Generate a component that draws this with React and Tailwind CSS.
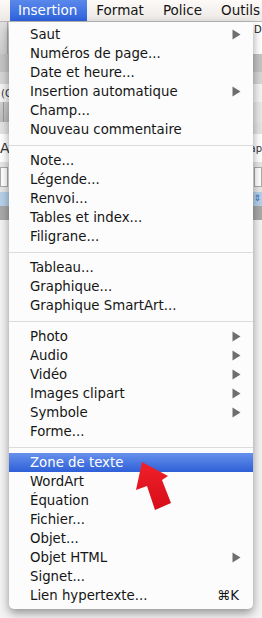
import React from 'react';

const groups = [
  [
    { label: 'Saut', sub: true },
    { label: 'Numéros de page...' },
    { label: 'Date et heure...' },
    { label: 'Insertion automatique', sub: true },
    { label: 'Champ...' },
    { label: 'Nouveau commentaire' },
  ],
  [
    { label: 'Note...' },
    { label: 'Légende...' },
    { label: 'Renvoi...' },
    { label: 'Tables et index...' },
    { label: 'Filigrane...' },
  ],
  [
    { label: 'Tableau...' },
    { label: 'Graphique...' },
    { label: 'Graphique SmartArt...' },
  ],
  [
    { label: 'Photo', sub: true },
    { label: 'Audio', sub: true },
    { label: 'Vidéo', sub: true },
    { label: 'Images clipart', sub: true },
    { label: 'Symbole', sub: true },
    { label: 'Forme...' },
  ],
  [
    { label: 'Zone de texte', active: true },
    { label: 'WordArt' },
    { label: 'Équation' },
    { label: 'Fichier...' },
    { label: 'Objet...' },
    { label: 'Objet HTML', sub: true },
    { label: 'Signet...' },
    { label: 'Lien hypertexte...', shortcut: '⌘K' },
  ],
];

const SubArrow = () => (
  <svg width="9" height="11" viewBox="0 0 9 11" className="mr-[1px]">
    <path d="M0.5 0.5 L8.5 5.5 L0.5 10.5 Z" fill="#6e6e6e" />
  </svg>
);

const MenuItem = ({ item }) => (
  <div
    className={
      'h-[19px] flex items-center justify-between pl-[21px] pr-[11px] ' +
      (item.active
        ? 'bg-gradient-to-b from-[#6690ea] to-[#2f5fd8] text-white'
        : 'text-[#151515]')
    }
  >
    <span>{item.label}</span>
    {item.sub && <SubArrow />}
    {item.shortcut && <span className="pr-[3px]">{item.shortcut}</span>}
  </div>
);

const App = () => {
  return (
    <div className="relative w-[262px] h-[618px] overflow-hidden bg-[#f1f1f1] font-['DejaVu_Sans',sans-serif]">
      {/* menubar */}
      <div className="h-[22px] flex items-stretch bg-gradient-to-b from-[#fdfaf7] to-[#ebe8e5] border-b border-[#b9b9b9] text-[13.5px] text-[#141414] whitespace-nowrap">
        <div className="ml-[10px] pl-[8px] pr-[10px] flex items-center bg-gradient-to-b from-[#5a88ea] to-[#2e61dc] text-white">
          Insertion
        </div>
        <div className="pl-[9px] pr-[10px] flex items-center">Format</div>
        <div className="pl-[9px] pr-[10px] flex items-center">Police</div>
        <div className="pl-[9px] flex items-center">Outils</div>
      </div>

      {/* app window behind the menu */}
      <div className="flex flex-col text-[12px] text-[#333]">
        <div className="h-[32px] bg-gradient-to-b from-[#e0e0e0] to-[#cdcdcd] flex justify-between">
          <div className="w-[8px] border-r border-[#aaa]" />
          <div className="w-[9px] bg-white pl-[1px] text-[10px] text-[#222]">D</div>
        </div>
        <div className="h-[18px] bg-[#c4c4c4]" />
        <div className="h-[12px] bg-[#d6d6d6]" />
        <div className="h-[18px] bg-[#f4f4f4] flex items-center px-[1px] text-[10px]">
          <span>(C</span>
        </div>
        <div className="h-[20px] bg-gradient-to-b from-[#cfcfcf] to-[#bdbdbd] flex justify-between">
          <div className="w-[4px] border-r border-[#999]" />
          <div className="w-[9px] bg-[#e8e8e8]" />
        </div>
        <div className="h-[12px] bg-[#e4e4e4]" />
        <div className="h-[28px] bg-white flex items-center justify-between text-[14px]">
          <span>A</span>
          <span className="text-[10px]">ap</span>
        </div>
        <div className="h-[30px] bg-[#e7e7e7] flex items-center justify-between">
          <div className="w-[8px] h-[20px] border border-[#aaa] bg-white" />
          <div className="w-[8px] h-[20px] border border-[#aaa] bg-white" />
        </div>
        <div className="h-[14px] bg-[#b7d0ea] flex justify-end">
          <span className="text-[9px] text-[#3a6fc4] pr-[1px]">⇕</span>
        </div>
        <div className="h-[14px] bg-[#a9a9a9]" />
        <div className="h-[400px] bg-[#f3f3f3]" />
      </div>

      {/* Insertion menu */}
      <div className="absolute left-[9px] top-[22px] w-[244px] pt-[3px] pb-[4px] bg-[#fcfcfc] rounded-b-[5px] shadow-[0_4px_10px_rgba(0,0,0,0.4)] text-[13.3px]">
        {groups.map((group, gi) => (
          <div key={gi}>
            {gi > 0 && (
              <div className="h-[12px] flex items-center">
                <div className="h-px w-full bg-[#dcdcdc]" />
              </div>
            )}
            {group.map(item => (
              <MenuItem key={item.label} item={item} />
            ))}
          </div>
        ))}
      </div>

      {/* red arrow */}
      <svg className="absolute left-0 top-0" width="262" height="618" viewBox="0 0 262 618">
        <defs>
          <linearGradient id="redArrow" x1="0" y1="0" x2="0" y2="1">
            <stop offset="0" stopColor="#f0202a" />
            <stop offset="1" stopColor="#d60d18" />
          </linearGradient>
        </defs>
        <path
          d="M142 462 L168 476 L162 480 L171 503 L155 510 L147 486 L136 490 Z"
          fill="url(#redArrow)"
        />
      </svg>
    </div>
  );
};

export default App;
